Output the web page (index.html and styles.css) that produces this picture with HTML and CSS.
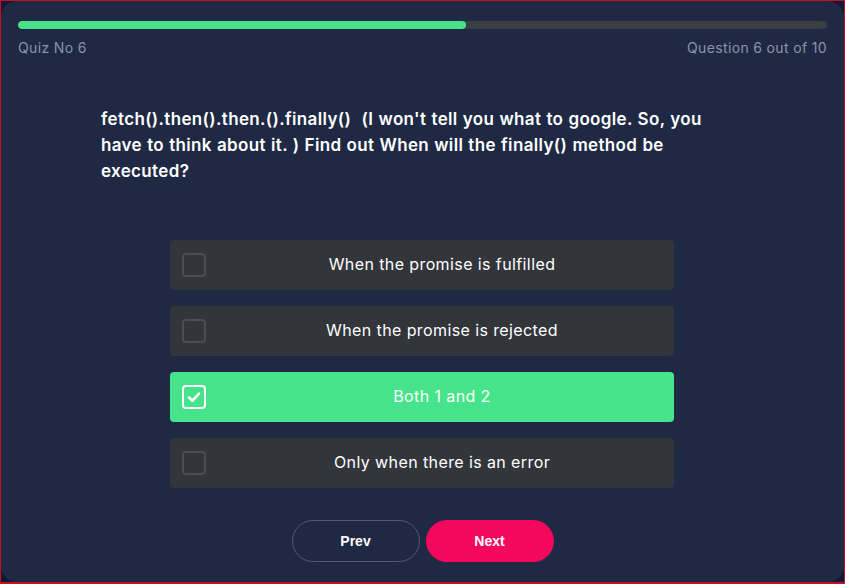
FILE: index.html
```html
<!DOCTYPE html>
<html lang="en">
<head>
<meta charset="utf-8">
<title>Quiz</title>
<link rel="stylesheet" href="styles.css">
</head>
<body>
<div class="frame">
  <main class="card">
    <div class="progress"><div class="progress-fill" style="width:55.4%"></div></div>
    <div class="meta">
      <span>Quiz No 6</span>
      <span>Question 6 out of 10</span>
    </div>
    <h1 class="question">fetch().then().then.().finally()&nbsp; (I won't tell you what to google. So, you have to think about it. ) Find out When will the finally() method be executed?</h1>
    <ul class="options">
      <li class="option"><span class="box"></span><span class="label">When the promise is fulfilled</span></li>
      <li class="option"><span class="box"></span><span class="label">When the promise is rejected</span></li>
      <li class="option selected"><span class="box"><svg viewBox="0 0 24 24" width="20" height="20"><path d="M6 12.5l4 4L18 8" fill="none" stroke="#fff" stroke-width="3.2" stroke-linecap="round" stroke-linejoin="round"/></svg></span><span class="label">Both 1 and 2</span></li>
      <li class="option"><span class="box"></span><span class="label">Only when there is an error</span></li>
    </ul>
    <div class="actions">
      <button class="btn prev">Prev</button>
      <button class="btn next">Next</button>
    </div>
  </main>
</div>
</body>
</html>
```

FILE: styles.css
```css
* { box-sizing: border-box; }
html, body { margin: 0; height: 100%; }
body {
  background: #c4121c;
  padding: 1px 1px 2px 1px;
  font-family: "Inter", "Noto Sans", sans-serif;
}
.frame {
  height: 100%;
  background: #14163a;
}
.card {
  height: 100%;
  background: #1f2944;
  border-radius: 16px;
  padding: 20px 17px 0 17px;
  display: flex;
  flex-direction: column;
}
.progress {
  height: 8px;
  border-radius: 4px;
  background: #3a3f44;
  overflow: hidden;
}
.progress-fill {
  height: 100%;
  background: #45e28a;
  border-radius: 4px;
}
.meta {
  display: flex;
  justify-content: space-between;
  margin-top: 10px;
  font-size: 14px;
  line-height: 18px;
  color: #8b92a8;
  font-weight: 400;
  letter-spacing: 0.35px;
}
.question {
  margin: 49px 0 0 83px;
  width: 605px;
  font-size: 17px;
  line-height: 26px;
  font-weight: 600;
  color: #ffffff;
  letter-spacing: 0.35px;
  word-spacing: 0.5px;
}
.options {
  list-style: none;
  margin: 56px 0 0 152px;
  padding: 0;
  width: 504px;
  display: flex;
  flex-direction: column;
  gap: 16px;
}
.option {
  height: 50px;
  background: #32353a;
  border-radius: 4px;
  display: flex;
  align-items: center;
  padding-left: 12px;
}
.box {
  width: 24px;
  height: 24px;
  border: 2px solid #4a4d53;
  border-radius: 4px;
  display: flex;
  align-items: center;
  justify-content: center;
  flex: none;
}
.label {
  flex: 1;
  text-align: center;
  margin-left: 4px;
  margin-top: -2px;
  color: #ffffff;
  font-size: 16px;
  font-weight: 400;
  letter-spacing: 0.4px;
}
.option.selected { background: #45e38a; }
.option.selected .box { border-color: #ffffff; }
.actions {
  display: flex;
  justify-content: center;
  gap: 6px;
  margin-top: 32px;
}
.btn {
  width: 128px;
  height: 42px;
  border-radius: 21px;
  font-family: "Liberation Sans", Arial, sans-serif;
  font-size: 14px;
  font-weight: 700;
  color: #ffffff;
  cursor: pointer;
}
.prev {
  background: transparent;
  border: 1px solid #525a70;
}
.next {
  background: #f4085e;
  border: none;
}
```
